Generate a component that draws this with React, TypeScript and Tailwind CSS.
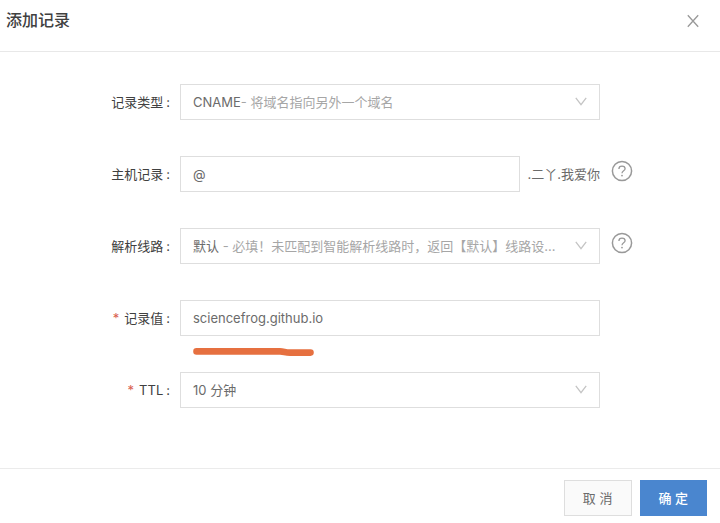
import React from 'react';

const border = 'border border-[#dedede]';

const ChevronIcon: React.FC = () => (
  <svg className="w-3 h-3 shrink-0" viewBox="0 0 12 12" fill="none" stroke="#c4c4c4" strokeWidth="1.3">
    <path d="M0.8 1.8 L6 8.6 L11.2 1.8" />
  </svg>
);

const HelpButton: React.FC<{ label: string }> = ({ label }) => (
  <button type="button" aria-label={label} className="ml-[11px] mb-1.5 shrink-0">
    <svg className="block w-[22px] h-[22px]" viewBox="0 0 22 22" fill="none" stroke="#999999">
      <circle cx="11" cy="11" r="9.6" strokeWidth="1.5" />
      <path d="M7.9 8.9 C7.9 7.1 9.2 6.1 11 6.1 C12.8 6.1 14.1 7.1 14.1 8.8 C14.1 10.9 11 10.8 11 13.2" strokeWidth="1.3" />
      <circle cx="11" cy="15.6" r="0.9" fill="#999999" stroke="none" />
    </svg>
  </button>
);

type RowProps = {
  id: string;
  label: string;
  required?: boolean;
  extra?: React.ReactNode;
  children: React.ReactNode;
};

const Row: React.FC<RowProps> = ({ id, label, required, extra, children }) => (
  <div className="flex items-center">
    <label htmlFor={id} className="w-1/4 pr-2.5 flex justify-end whitespace-nowrap text-[#404040]">
      {required && <span className="mr-[5px] text-[#d9604f]">*</span>}
      {label}
      <span className="ml-[3px]">:</span>
    </label>
    <div className="w-7/12 relative">{children}</div>
    {extra}
  </div>
);

type DropdownProps = {
  id: string;
  value: string;
  hint?: string;
};

// The native select sits on top, the two-tone text below it is only for display
const Dropdown: React.FC<DropdownProps> = ({ id, value, hint }) => (
  <div className={`relative h-9 px-3 flex items-center justify-between bg-white ${border}`}>
    <span aria-hidden="true" className="truncate text-[#6b6b6b]">
      {value}
      {hint && <span className="text-[#a6a6a6] whitespace-pre">{hint}</span>}
    </span>
    <ChevronIcon />
    <select id={id} className="absolute inset-0 w-full h-full opacity-0 cursor-pointer">
      <option>{value}</option>
    </select>
  </div>
);

export default function App() {
  return (
    <div
      role="dialog"
      aria-labelledby="dialog-title"
      className="bg-white text-[13px] leading-5 font-[Inter,'Noto_Sans_CJK_SC',sans-serif]"
    >
      <header className="flex items-center justify-between pl-1.5 pr-5 pt-2 pb-[19px] border-b border-[#e8e8e8]">
        <h1 id="dialog-title" className="text-base leading-6 font-medium text-[#404040]">添加记录</h1>
        <button type="button" aria-label="关闭" className="pt-0.5">
          <svg className="block w-3.5 h-3.5" viewBox="0 0 14 14" fill="none" stroke="#999999" strokeWidth="1.3">
            <path d="M1.8 1.2 L12.2 12.8 M12.2 1.2 L1.8 12.8" />
          </svg>
        </button>
      </header>

      <form>
        <div className="pt-8 pb-[60px] flex flex-col gap-9">
          <Row id="type" label="记录类型">
            <Dropdown id="type" value="CNAME" hint="- 将域名指向另外一个域名" />
          </Row>

          <Row id="host" label="主机记录" extra={<HelpButton label="主机记录说明" />}>
            <div className="flex items-center">
              <input id="host" defaultValue="@" className={`flex-1 min-w-0 h-9 px-3 text-[#6b6b6b] ${border}`} />
              <span className="pl-2 whitespace-nowrap text-[#6b6b6b]">.二丫.我爱你</span>
            </div>
          </Row>

          <Row id="line" label="解析线路" extra={<HelpButton label="解析线路说明" />}>
            <Dropdown id="line" value="默认" hint=" - 必填！未匹配到智能解析线路时，返回【默认】线路设..." />
          </Row>

          <Row id="value" label="记录值" required>
            <input
              id="value"
              defaultValue="sciencefrog.github.io"
              className={`block w-full h-9 px-3 text-[#6b6b6b] ${border}`}
            />
            {/* hand-drawn marker under the value */}
            <svg
              className="absolute left-3 top-full mt-[11px] w-[124px] h-2.5"
              viewBox="0 0 124 10"
              fill="none"
              stroke="#e67040"
              strokeWidth="6.6"
              strokeLinecap="round"
              strokeLinejoin="round"
            >
              <path d="M4.5 4.4 H88 C92 4.4 93 5.6 98 5.6 H118.5" />
            </svg>
          </Row>

          <Row id="ttl" label="TTL" required>
            <Dropdown id="ttl" value="10 分钟" />
          </Row>
        </div>

        <footer className="flex justify-end gap-2 pt-[11px] pb-1.5 pr-[13px] border-t border-[#ebebeb]">
          <button type="button" className={`h-9 px-[18px] bg-[#fafafa] text-[#6b6b6b] ${border}`}>
            取 消
          </button>
          <button type="submit" className="h-9 px-[19px] bg-[#4a86cf] font-medium text-white">
            确 定
          </button>
        </footer>
      </form>
    </div>
  );
}
